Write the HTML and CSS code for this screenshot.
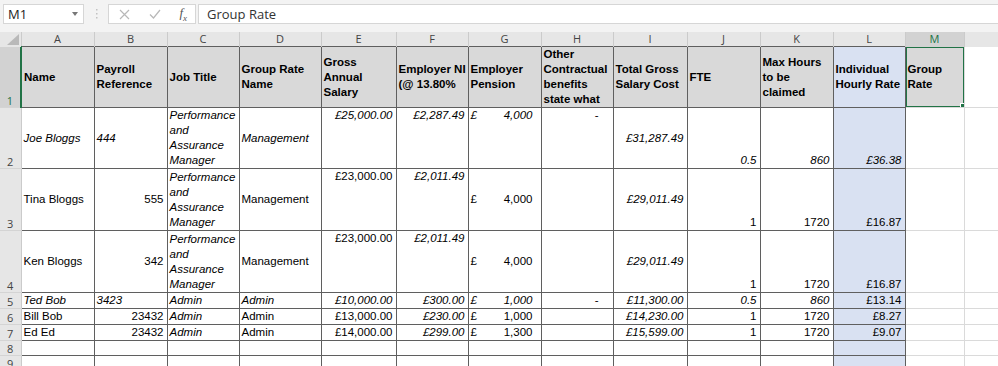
FILE: index.html
```html
<!DOCTYPE html>
<html>
<head>
<title>Group Rate</title>
<link rel="stylesheet" href="styles.css">
</head>
<body>
<div class="formula-bar">
  <div class="name-box">
    <span>M1</span>
    <svg class="caret" width="6" height="4" viewBox="0 0 6 4"><path d="M0 0h6L3 4z" fill="#777"/></svg>
  </div>
  <div class="grip">
    <svg width="3" height="12" viewBox="0 0 3 12"><rect x="1" y="1" width="1.5" height="1.5" fill="#c2c2c2"/><rect x="1" y="5" width="1.5" height="1.5" fill="#c2c2c2"/><rect x="1" y="9" width="1.5" height="1.5" fill="#c2c2c2"/></svg>
  </div>
  <div class="fx-buttons">
    <svg width="11" height="11" viewBox="0 0 11 11"><path d="M1 1l9 9M10 1l-9 9" stroke="#b8b8b8" stroke-width="1.2"/></svg>
    <svg width="12" height="10" viewBox="0 0 12 10"><path d="M1 5.5l3.5 3.5L11 1" stroke="#b8b8b8" stroke-width="1.2" fill="none"/></svg>
    <span class="fx">f<sub>x</sub></span>
  </div>
  <div class="formula">Group Rate</div>
</div>

<table class="sheet">
  <colgroup>
    <col class="c-rh">
    <col class="c-a"><col class="c-b"><col class="c-c"><col class="c-d"><col class="c-e"><col class="c-f">
    <col class="c-g"><col class="c-h"><col class="c-i"><col class="c-j"><col class="c-k"><col class="c-l">
    <col class="c-m"><col class="c-n">
  </colgroup>
  <tr class="col-heads">
    <th class="corner"><span class="tri"></span></th>
    <th>A</th><th>B</th><th>C</th><th>D</th><th>E</th><th>F</th><th>G</th>
    <th>H</th><th>I</th><th>J</th><th>K</th><th>L</th><th class="sel">M</th><th></th>
  </tr>
  <tr class="r1">
    <th class="rh sel">1</th>
    <td class="b hd">Name</td>
    <td class="b hd">Payroll Reference</td>
    <td class="b hd">Job Title</td>
    <td class="b hd">Group Rate Name</td>
    <td class="b hd">Gross Annual Salary</td>
    <td class="b hd"><span class="nowrap">Employer NI</span> (@ 13.80%</td>
    <td class="b hd">Employer Pension</td>
    <td class="b hd">Other Contractual benefits state what</td>
    <td class="b hd">Total Gross Salary Cost</td>
    <td class="b hd">FTE</td>
    <td class="b hd">Max Hours to be claimed</td>
    <td class="b hd blue">Individual Hourly Rate</td>
    <td class="g hd active">Group Rate<div class="selection"><span class="handle"></span></div></td>
    <td class="g"></td>
  </tr>
  <tr class="r2">
    <th class="rh">2</th>
    <td class="b i mid">Joe Bloggs</td>
    <td class="b i mid">444</td>
    <td class="b i mid">Performance and Assurance Manager</td>
    <td class="b i mid">Management</td>
    <td class="b i r top">£25,000.00</td>
    <td class="b i r top">£2,287.49</td>
    <td class="b i top"><div class="acc"><span>£</span><span>4,000</span></div></td>
    <td class="b top dash">-</td>
    <td class="b i r mid">£31,287.49</td>
    <td class="b i r">0.5</td>
    <td class="b i r">860</td>
    <td class="b i r blue">£36.38</td>
    <td class="g"></td><td class="g"></td>
  </tr>
  <tr class="r3">
    <th class="rh">3</th>
    <td class="b mid">Tina Bloggs</td>
    <td class="b r mid">555</td>
    <td class="b i mid">Performance and Assurance Manager</td>
    <td class="b mid">Management</td>
    <td class="b r top">£23,000.00</td>
    <td class="b i r top">£2,011.49</td>
    <td class="b mid"><div class="acc"><span>£</span><span>4,000</span></div></td>
    <td class="b"></td>
    <td class="b i r mid">£29,011.49</td>
    <td class="b r">1</td>
    <td class="b r">1720</td>
    <td class="b r blue">£16.87</td>
    <td class="g"></td><td class="g"></td>
  </tr>
  <tr class="r4">
    <th class="rh">4</th>
    <td class="b mid">Ken Bloggs</td>
    <td class="b r mid">342</td>
    <td class="b i mid">Performance and Assurance Manager</td>
    <td class="b mid">Management</td>
    <td class="b r top">£23,000.00</td>
    <td class="b i r top">£2,011.49</td>
    <td class="b mid"><div class="acc"><span>£</span><span>4,000</span></div></td>
    <td class="b"></td>
    <td class="b i r mid">£29,011.49</td>
    <td class="b r">1</td>
    <td class="b r">1720</td>
    <td class="b r blue">£16.87</td>
    <td class="g"></td><td class="g"></td>
  </tr>
  <tr class="r5">
    <th class="rh">5</th>
    <td class="b i">Ted Bob</td>
    <td class="b i">3423</td>
    <td class="b i">Admin</td>
    <td class="b i">Admin</td>
    <td class="b i r">£10,000.00</td>
    <td class="b i r">£300.00</td>
    <td class="b i"><div class="acc"><span>£</span><span>1,000</span></div></td>
    <td class="b dash">-</td>
    <td class="b i r">£11,300.00</td>
    <td class="b i r">0.5</td>
    <td class="b i r">860</td>
    <td class="b r blue">£13.14</td>
    <td class="g"></td><td class="g"></td>
  </tr>
  <tr class="r6">
    <th class="rh">6</th>
    <td class="b">Bill Bob</td>
    <td class="b r">23432</td>
    <td class="b i">Admin</td>
    <td class="b">Admin</td>
    <td class="b r">£13,000.00</td>
    <td class="b i r">£230.00</td>
    <td class="b"><div class="acc"><span>£</span><span>1,000</span></div></td>
    <td class="b"></td>
    <td class="b i r">£14,230.00</td>
    <td class="b r">1</td>
    <td class="b r">1720</td>
    <td class="b r blue">£8.27</td>
    <td class="g"></td><td class="g"></td>
  </tr>
  <tr class="r7">
    <th class="rh">7</th>
    <td class="b">Ed Ed</td>
    <td class="b r">23432</td>
    <td class="b i">Admin</td>
    <td class="b">Admin</td>
    <td class="b r">£14,000.00</td>
    <td class="b i r">£299.00</td>
    <td class="b"><div class="acc"><span>£</span><span>1,300</span></div></td>
    <td class="b"></td>
    <td class="b i r">£15,599.00</td>
    <td class="b r">1</td>
    <td class="b r">1720</td>
    <td class="b r blue">£9.07</td>
    <td class="g"></td><td class="g"></td>
  </tr>
  <tr class="r8">
    <th class="rh">8</th>
    <td class="b"></td><td class="b"></td><td class="b"></td><td class="b"></td><td class="b"></td><td class="b"></td>
    <td class="b"></td><td class="b"></td><td class="b"></td><td class="b"></td><td class="b"></td><td class="b blue"></td>
    <td class="g"></td><td class="g"></td>
  </tr>
  <tr class="r9">
    <th class="rh">9</th>
    <td class="b"></td><td class="b"></td><td class="b"></td><td class="b"></td><td class="b"></td><td class="b"></td>
    <td class="b"></td><td class="b"></td><td class="b"></td><td class="b"></td><td class="b"></td><td class="b blue"></td>
    <td class="g"></td><td class="g"></td>
  </tr>
</table>
</body>
</html>
```

FILE: styles.css
```css
body {
  margin: 0;
  background: #ffffff;
  font-family: "Liberation Sans", Arial, sans-serif;
  overflow: hidden;
}

/* formula bar */
.formula-bar {
  height: 32px;
  box-sizing: border-box;
  padding: 4px 0 0 3px;
  background: #f3f3f3;
  display: flex;
  align-items: flex-start;
  font-family: "Open Sans", "Liberation Sans", sans-serif;
  font-size: 13px;
  color: #222;
}

.name-box {
  width: 81px;
  height: 20px;
  box-sizing: border-box;
  background: #fff;
  border: 1px solid #d6d6d6;
  display: flex;
  align-items: center;
  justify-content: space-between;
  padding: 0 5px 0 4px;
}

.grip {
  width: 24px;
  height: 20px;
  display: flex;
  align-items: center;
  justify-content: center;
}

.fx-buttons {
  width: 88px;
  height: 20px;
  box-sizing: border-box;
  background: #fff;
  border: 1px solid #d6d6d6;
  display: flex;
  align-items: center;
  justify-content: space-between;
  padding: 0 8px 0 10px;
}

.fx {
  font-family: "Liberation Serif", serif;
  font-style: italic;
  font-size: 13px;
  color: #555;
}

.fx sub {
  font-size: 9px;
}

.formula {
  flex: 1;
  height: 20px;
  box-sizing: border-box;
  margin-left: 2px;
  background: #fff;
  border: 1px solid #d6d6d6;
  border-right: none;
  padding: 0 8px;
  line-height: 18px;
  color: #333;
}

/* sheet */
.sheet {
  border-collapse: collapse;
  table-layout: fixed;
  width: 1040px;
  font-size: 11.5px;
  line-height: 15px;
  color: #000;
}

.c-rh { width: 21px; }
.c-a { width: 73px; }
.c-b { width: 73px; }
.c-c { width: 72px; }
.c-d { width: 82px; }
.c-e { width: 75px; }
.c-f { width: 72px; }
.c-g { width: 73px; }
.c-h { width: 72px; }
.c-i { width: 74px; }
.c-j { width: 73px; }
.c-k { width: 73px; }
.c-l { width: 72px; }
.c-m { width: 59px; }
.c-n { width: 76px; }

.col-heads th {
  height: 14px;
  padding: 0;
  background: #e6e6e6;
  border-right: 1px solid #cbcbcb;
  font-family: "Open Sans", "Liberation Sans", sans-serif;
  font-weight: normal;
  font-size: 11px;
  line-height: 14px;
  color: #444;
  text-align: center;
}

.col-heads th.sel {
  background: #d2d2d2;
  color: #217346;
}

.corner {
  position: relative;
}

.corner .tri {
  position: absolute;
  right: 2px;
  bottom: 2px;
  width: 0;
  height: 0;
  border-left: 12px solid transparent;
  border-bottom: 11px solid #b9b9b9;
}

.rh {
  padding: 0;
  background: #e6e6e6;
  border-right: 1px solid #cbcbcb;
  border-bottom: 1px solid #d4d4d4;
  font-family: "Open Sans", "Liberation Sans", sans-serif;
  font-weight: normal;
  font-size: 11px;
  line-height: 13px;
  color: #444;
  text-align: center;
  vertical-align: bottom;
}

.rh.sel {
  background: #d2d2d2;
  color: #217346;
  border-right: 2px solid #217346;
}

.r1 { height: 59px; }
.r2 { height: 61px; }
.r3 { height: 62px; }
.r4 { height: 62px; }
.r5 { height: 16px; }
.r6 { height: 15px; }
.r7 { height: 15px; }
.r8 { height: 15px; }
.r9 { height: 15px; }

td {
  padding: 0 2px;
  vertical-align: bottom;
  white-space: normal;
  overflow: hidden;
}

td.b {
  border: 1px solid #5f5f5f;
}

td.g {
  border-right: 1px solid #dadada;
  border-bottom: 1px solid #dadada;
}

.hd {
  background: #d9d9d9;
  font-weight: bold;
  vertical-align: middle;
}

.nowrap {
  white-space: nowrap;
}

.blue {
  background: #d9e1f2;
}

.i { font-style: italic; }
.r { text-align: right; padding-right: 3px; }
.top { vertical-align: top; }
.mid { vertical-align: middle; }

.dash {
  text-align: right;
  padding-right: 14px;
}

.acc {
  display: flex;
  justify-content: space-between;
  padding-right: 6px;
}

.active {
  position: relative;
}

.selection {
  position: absolute;
  left: -1px;
  top: -1px;
  right: -1px;
  bottom: -1px;
  border: 2px solid #217346;
}

.handle {
  position: absolute;
  right: -4px;
  bottom: -4px;
  width: 5px;
  height: 5px;
  background: #217346;
  border: 1px solid #fff;
}
```
